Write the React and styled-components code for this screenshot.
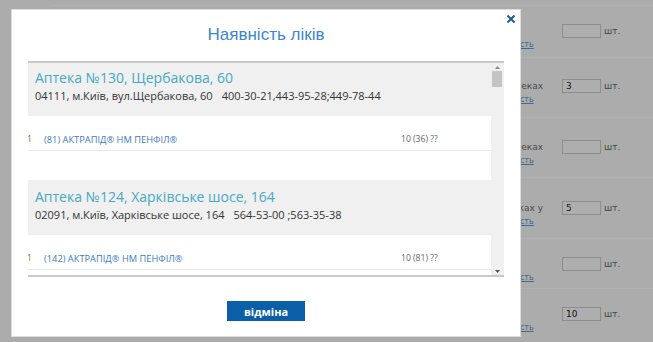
import React, { useEffect, useRef } from "react";
import styled, { createGlobalStyle } from "styled-components";

const GlobalStyle = createGlobalStyle`
  html, body {
    margin: 0;
    padding: 0;
  }
  body {
    width: 653px;
    height: 342px;
    overflow: hidden;
    background: #f7f7f7;
    font-family: "Open Sans", "Liberation Sans", sans-serif;
  }
`;

/* page behind the dialog */
const Page = styled.div`
  padding: 5px 0 0 50px;
`;

const Row = styled.div`
  display: flex;
  height: ${(p) => p.$h}px;
  padding: ${(p) => p.$pad}px 0 0 438px;
  box-sizing: border-box;
  border-top: 1px solid #ffffff;
  font-family: "DejaVu Sans", Verdana, sans-serif;
`;

const Order = styled.div`
  display: flex;
  flex-direction: column;
`;

const OrderLine = styled.div`
  display: flex;
  align-items: center;
  height: 14px;
`;

const Label = styled.span`
  width: 55px;
  text-align: right;
  font-size: 9px;
  color: #6a6a6a;
  white-space: nowrap;
`;

const Amount = styled.input`
  width: 39px;
  height: 14px;
  margin: 0 0 0 19px;
  padding: 0 3px;
  box-sizing: border-box;
  border: 1px solid #c9c9c9;
  background: #f9f9f9;
  font-family: "DejaVu Sans", Verdana, sans-serif;
  font-size: 9px;
  color: #222;
`;

const Unit = styled.span`
  margin-left: 3px;
  font-size: 9px;
  color: #666;
`;

const StockLink = styled.a`
  margin: 1px 0 0 4px;
  font-size: 8px;
  line-height: 12px;
  color: #6a95c8;
  text-decoration: underline;
`;

const Backdrop = styled.div`
  position: fixed;
  inset: 0;
  background: rgba(0, 0, 0, 0.3);
`;

/* dialog */
const Modal = styled.div`
  position: fixed;
  left: 11px;
  top: 9px;
  width: 510px;
  box-sizing: border-box;
  border: 1px solid #dcdcdc;
  background: #ffffff;
  padding: 15px 16px 15px;
  display: flex;
  flex-direction: column;
`;

const Close = styled.button`
  position: absolute;
  top: 5px;
  right: 5px;
  width: 8px;
  height: 8px;
  padding: 0;
  border: 0;
  background: none;
  display: flex;
  cursor: pointer;
`;

const Title = styled.h2`
  margin: 0 0 16px;
  font-family: "Liberation Sans", Arial, sans-serif;
  font-weight: normal;
  font-size: 17px;
  line-height: 20px;
  text-align: center;
  color: #3d86cb;
`;

const List = styled.div`
  display: flex;
  height: 216px;
  box-sizing: border-box;
  background: #f0f0f0;
  border-top: 2px solid #c9c9c9;
  border-bottom: 2px solid #c9c9c9;
`;

const Viewport = styled.div`
  flex: 1;
  overflow: hidden;
`;

const Scrollbar = styled.div`
  width: 13px;
  display: flex;
  flex-direction: column;
  background: #f0f0f0;
`;

const ScrollButton = styled.div`
  height: 8px;
  display: flex;
  align-items: center;
  justify-content: center;
`;

const Track = styled.div`
  flex: 1;
  padding-left: 1px;
`;

const Thumb = styled.div`
  width: 10px;
  height: 16px;
  background: #c4c4c4;
`;

const Pharmacy = styled.section`
  display: flex;
  flex-direction: column;
`;

const PharmacyHead = styled.div`
  height: 55px;
  box-sizing: border-box;
  padding: 8px 7px 0;
`;

const PharmacyName = styled.div`
  font-size: 14px;
  line-height: 18px;
  color: #47a9c2;
`;

const Address = styled.div`
  margin-top: 2px;
  font-size: 11px;
  line-height: 14px;
  color: #333;
  white-space: nowrap;
`;

const Phone = styled.span`
  margin-left: 9px;
`;

const Stock = styled.div`
  height: 64px;
  box-sizing: border-box;
  padding-top: 12px;
  background: #ffffff;
`;

const StockRow = styled.div`
  display: grid;
  grid-template-columns: 16px 357px 1fr;
  align-items: center;
  height: 22px;
  border-bottom: 1px solid #e9e9e9;
  font-size: 8.6px;
`;

const Count = styled.span`
  color: #7d6b2b;
  margin-left: -1px;
`;

const Drug = styled.a`
  color: #3c7cc4;
  font-size: 9.3px;
  text-transform: uppercase;
  text-decoration: none;
`;

const Qty = styled.span`
  color: #666;
`;

const Footer = styled.div`
  display: flex;
  justify-content: center;
  margin-top: 24px;
`;

const CancelButton = styled.button`
  width: 78px;
  height: 20px;
  border: 0;
  background: #0b5fa8;
  color: #ffffff;
  font-family: "Open Sans", sans-serif;
  font-size: 11px;
  font-weight: 700;
  padding: 0;
  cursor: pointer;
`;

const rows = [
  { h: 52, pad: 18, label: "", value: "" },
  { h: 60, pad: 21, label: "в аптеках", value: "3" },
  { h: 60, pad: 22, label: "в аптеках", value: "" },
  { h: 61, pad: 23, label: "в аптеках у", value: "5" },
  { h: 50, pad: 18, label: "", value: "" },
  { h: 52, pad: 18, label: "", value: "10" },
];

const pharmacies = [
  { no: 130, name: "Щербакова, 60", zip: "04111", addr: "вул.Щербакова, 60", phone: "400-30-21,443-95-28;449-78-44", code: 81, qty: "10 (36) ??" },
  { no: 124, name: "Харківське шосе, 164", zip: "02091", addr: "Харківське шосе, 164", phone: "564-53-00 ;563-35-38", code: 142, qty: "10 (81) ??" },
];

function CloseIcon() {
  return (
    <svg width="8" height="8" viewBox="0 0 8 8">
      <path d="M1.2 1.2L6.8 6.8M6.8 1.2L1.2 6.8" stroke="#1d5a9c" strokeWidth="2" strokeLinecap="square" />
    </svg>
  );
}

function Arrow({ down }) {
  return (
    <svg width="5" height="3" viewBox="0 0 5 3">
      <path d={down ? "M0 0L5 0L2.5 3Z" : "M0 3L2.5 0L5 3Z"} fill={down ? "#555" : "#888"} />
    </svg>
  );
}

export default function App() {
  const viewport = useRef(null);

  useEffect(() => {
    if (viewport.current) viewport.current.scrollTop = 2;
  }, []);

  return (
    <>
      <GlobalStyle />
      <Page>
        {rows.map((r, i) => (
          <Row key={i} $h={r.h} $pad={r.pad}>
            <Order>
              <OrderLine>
                <Label>{r.label}</Label>
                <Amount defaultValue={r.value} />
                <Unit>шт.</Unit>
              </OrderLine>
              <StockLink href="#">Наявність</StockLink>
            </Order>
          </Row>
        ))}
      </Page>
      <Backdrop />
      <Modal>
        <Close aria-label="close">
          <CloseIcon />
        </Close>
        <Title>Наявність ліків</Title>
        <List>
          <Viewport ref={viewport}>
            {pharmacies.map((p) => (
              <Pharmacy key={p.no}>
                <PharmacyHead>
                  <PharmacyName>
                    Аптека №{p.no}, {p.name}
                  </PharmacyName>
                  <Address>
                    {p.zip}, м.Київ, {p.addr}
                    <Phone>{p.phone}</Phone>
                  </Address>
                </PharmacyHead>
                <Stock>
                  <StockRow>
                    <Count>1</Count>
                    <Drug href="#">({p.code}) АКТРАПІД® НМ ПЕНФІЛ®</Drug>
                    <Qty>{p.qty}</Qty>
                  </StockRow>
                </Stock>
              </Pharmacy>
            ))}
          </Viewport>
          <Scrollbar>
            <ScrollButton>
              <Arrow />
            </ScrollButton>
            <Track>
              <Thumb />
            </Track>
            <ScrollButton>
              <Arrow down />
            </ScrollButton>
          </Scrollbar>
        </List>
        <Footer>
          <CancelButton>відміна</CancelButton>
        </Footer>
      </Modal>
    </>
  );
}
